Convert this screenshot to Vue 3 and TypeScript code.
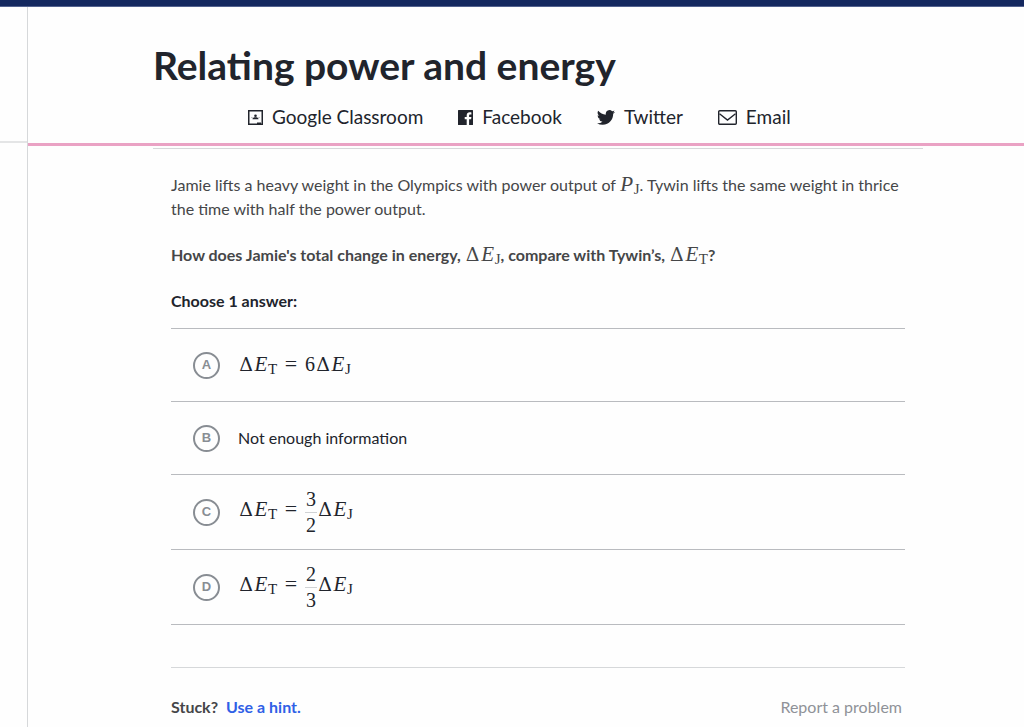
<script setup lang="ts">
import { ref } from 'vue'

type Kind = 'delta' | 'var' | 'sub' | 'rel' | 'num' | 'frac' | 'text'

interface Token {
  kind: Kind
  value: string
  den?: string
}

interface Choice {
  letter: string
  tokens: Token[]
}

const delta: Token = { kind: 'delta', value: 'Δ' }
const energy: Token = { kind: 'var', value: 'E' }
const subT: Token = { kind: 'sub', value: 'T' }
const subJ: Token = { kind: 'sub', value: 'J' }
const equals: Token = { kind: 'rel', value: '=' }

function equation(factor: Token): Token[] {
  return [delta, energy, subT, equals, factor, delta, energy, subJ]
}

const choices: Choice[] = [
  { letter: 'A', tokens: equation({ kind: 'num', value: '6' }) },
  { letter: 'B', tokens: [{ kind: 'text', value: 'Not enough information' }] },
  { letter: 'C', tokens: equation({ kind: 'frac', value: '3', den: '2' }) },
  { letter: 'D', tokens: equation({ kind: 'frac', value: '2', den: '3' }) },
]

const selected = ref<string>('')
</script>

<template>
  <div class="page">
    <div class="topbar"></div>
    <div class="shell">
      <aside class="rail"><div class="rail-head"></div></aside>
      <main class="main">
        <header class="header">
          <h1>Relating power and energy</h1>
          <nav class="share" aria-label="Share">
            <a href="#classroom">
              <svg width="15" height="15" viewBox="0 0 15 15" aria-hidden="true">
                <rect x="0.75" y="0.75" width="13.5" height="13.5" fill="none" stroke="currentColor" stroke-width="1.5" />
                <circle cx="7.5" cy="5.8" r="1.300" />
                <path d="M4.500 9.200c0-1.500 1.200-2 3-2s3 .5 3 2z" />
                <path d="M9 12.500h4v1.500H9z" />
                <path d="M3.200 7.500h1.400M10.400 7.500h1.400" stroke="currentColor" stroke-width="0.8" opacity="0.4" />
              </svg>
              <span>Google Classroom</span>
            </a>
            <a href="#facebook">
              <svg width="15" height="15" viewBox="0 0 15 15" aria-hidden="true">
                <path d="M.6 0h13.800a.6.6 0 0 1 .6.600v13.800a.6.6 0 0 1-.6.600h-3.300V9.300h2l.3-2.300h-2.300V5.500c0-.7.2-1.100 1.100-1.100h1.200V2.400c-.2 0-.9-.1-1.700-.1-1.800 0-3 1.100-3 3V7H6.700v2.300h2V15H.6a.6.6 0 0 1-.6-.6V.6A.6.6 0 0 1 .6 0z" />
              </svg>
              <span>Facebook</span>
            </a>
            <a href="#twitter">
              <svg width="18" height="15" viewBox="0 2 24 20" aria-hidden="true">
                <path d="M23.950 4.570a10 10 0 0 1-2.820.77 4.960 4.960 0 0 0 2.160-2.720c-.95.55-2 .95-3.130 1.180a4.920 4.920 0 0 0-8.380 4.480C7.690 8.100 4.070 6.130 1.640 3.160a4.920 4.920 0 0 0 1.520 6.570 4.900 4.900 0 0 1-2.230-.61v.06a4.920 4.920 0 0 0 3.950 4.830 5 5 0 0 1-2.210.08 4.940 4.940 0 0 0 4.600 3.420A9.870 9.870 0 0 1 0 19.540a13.990 13.990 0 0 0 7.550 2.210c9.050 0 14-7.500 14-13.980 0-.21 0-.42-.02-.63a9.940 9.940 0 0 0 2.420-2.570z" />
              </svg>
              <span>Twitter</span>
            </a>
            <a href="#email">
              <svg width="19" height="15" viewBox="0 0 19 15" aria-hidden="true">
                <rect x="0.7" y="0.7" width="17.600" height="13.600" rx="1" fill="none" stroke="currentColor" stroke-width="1.400" />
                <path d="M1.500 3.800 9.500 10l8-6.200" fill="none" stroke="currentColor" stroke-width="1.400" />
              </svg>
              <span>Email</span>
            </a>
          </nav>
        </header>

        <section class="exercise">
          <div class="body">
            <p>
              Jamie lifts a heavy weight in the Olympics with power output of
              <span class="math"><span class="var">P</span><span class="sub">J</span></span>. Tywin lifts the same weight in thrice the time with half the power output.
            </p>
            <p class="question">
              How does Jamie's total change in energy,
              <span class="math"><span class="delta">Δ</span><span class="var">E</span><span class="sub">J</span></span>, compare with Tywin’s,
              <span class="math"><span class="delta">Δ</span><span class="var">E</span><span class="sub">T</span></span>?
            </p>
            <fieldset>
              <legend>Choose 1 answer:</legend>
              <label v-for="choice in choices" :key="choice.letter" class="choice">
                <span class="bubble">
                  <input v-model="selected" type="radio" name="answer" :value="choice.letter" />
                  <span class="letter">{{ choice.letter }}</span>
                </span>
                <span class="answer">
                  <template v-for="(t, i) in choice.tokens" :key="i">
                    <span v-if="t.kind === 'frac'" class="frac"><span>{{ t.value }}</span><span class="den">{{ t.den }}</span></span>
                    <span v-else :class="t.kind">{{ t.value }}</span>
                  </template>
                </span>
              </label>
            </fieldset>
            <footer>
              <span class="stuck">Stuck?</span>
              <button type="button" class="hint">Use a hint.</button>
              <button type="button" class="report">Report a problem</button>
            </footer>
          </div>
        </section>
      </main>
    </div>
  </div>
</template>

<style>
body {
  margin: 0;
  background: #fefefe;
}
</style>

<style scoped>
.page {
  display: flex;
  flex-direction: column;
  min-height: 100vh;
  font-family: Lato, 'Liberation Sans', sans-serif;
  font-size: 16px;
  line-height: 24px;
  color: #21242c;
}
.topbar {
  height: 6px;
  background: #14285f;
  border-bottom: 1px solid #53628f;
}
.shell {
  display: flex;
  flex: 1;
}
.rail {
  flex: 0 0 27px;
  border-right: 1px solid #d6d8da;
}
.rail-head {
  height: 134px;
  border-bottom: 2px solid #e4e5e6;
}
.main {
  flex: 1;
  min-width: 0;
}
.header {
  padding: 34px 101px 14px 125px;
  border-bottom: 3px solid #eaa2c4;
}
h1 {
  margin: 0 0 16px;
  font-size: 39px;
  line-height: 48px;
  font-weight: 700;
}
.share {
  display: flex;
  gap: 35px;
  padding-left: 95px;
  font-size: 19px;
}
.share a {
  display: flex;
  align-items: center;
  gap: 9px;
  color: inherit;
  text-decoration: none;
}
.share svg {
  fill: currentColor;
}
.exercise {
  margin: 2px 101px 0 125px;
  border-top: 1px solid #d6d8da;
}
.body {
  padding: 24px 18px 8px;
}
p {
  margin: 0 0 22px;
  color: #454648;
}
.question,
legend,
.stuck,
.hint {
  font-weight: 700;
}
.math {
  font-weight: 400;
  white-space: nowrap;
}
.delta,
.var,
.sub,
.rel,
.num,
.frac {
  display: inline-block;
  font-family: 'Liberation Serif', serif;
  font-size: 20px;
  line-height: 20px;
  text-align: center;
}
.delta {
  width: 16px;
  font-family: 'DejaVu Serif', serif;
  font-size: 19px;
}
.var {
  width: 14px;
  font-size: 21px;
  font-style: italic;
}
.sub {
  position: relative;
  top: 3px;
  width: 9px;
  font-size: 15px;
  line-height: 15px;
  text-align: left;
}
.math .sub {
  width: auto;
}
.rel {
  width: 28px;
  font-size: 22px;
}
.num {
  width: 10px;
}
.frac {
  display: inline-flex;
  flex-direction: column;
  width: 12px;
  line-height: 25px;
  vertical-align: middle;
}
.den {
  border-top: 1px solid #d0d2d4;
}
fieldset {
  margin: 0;
  padding: 0;
  border: 0;
  min-width: 0;
}
legend {
  padding: 0 0 15px;
}
.choice {
  display: flex;
  align-items: center;
  gap: 18px;
  min-height: 72px;
  padding-left: 22px;
  border-bottom: 1px solid #b9bbbf;
}
.choice:has(.frac) {
  min-height: 74px;
}
legend + .choice {
  border-top: 1px solid #b9bbbf;
}
.bubble {
  display: grid;
  place-items: center;
}
.bubble input,
.letter {
  grid-area: 1 / 1;
}
.bubble input {
  appearance: none;
  box-sizing: border-box;
  width: 27px;
  height: 27px;
  margin: 0;
  border: 2px solid #888d93;
  border-radius: 50%;
}
.bubble input:checked {
  border-color: #1865f2;
}
.letter {
  font-family: 'Liberation Sans', sans-serif;
  font-size: 13px;
  line-height: 14px;
  font-weight: 700;
  color: #888d93;
}
.answer {
  white-space: nowrap;
}
footer {
  display: flex;
  gap: 8px;
  margin-top: 42px;
  padding: 27px 3px 0 0;
  border-top: 1px solid #d6d8da;
  color: #454648;
}
button {
  padding: 0;
  border: 0;
  background: none;
  font: inherit;
  cursor: pointer;
}
.hint {
  font-weight: 700;
  color: #2f60e6;
}
.report {
  margin-left: auto;
  color: #8f9298;
}
</style>
